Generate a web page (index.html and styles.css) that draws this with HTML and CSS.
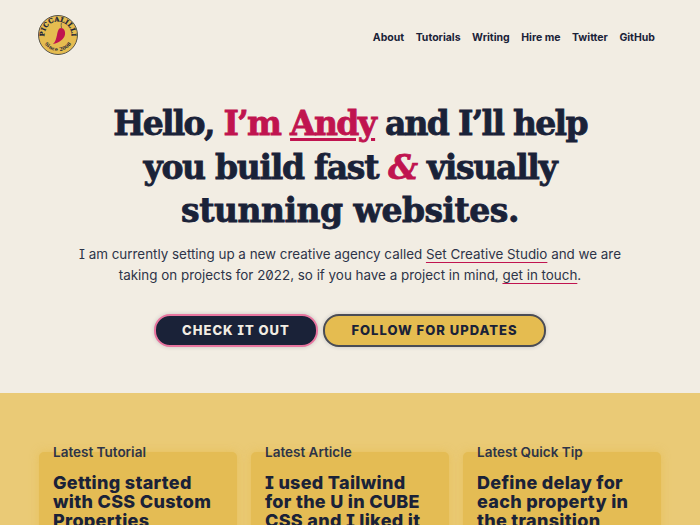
FILE: index.html
```html
<!DOCTYPE html>
<html lang="en">
<head>
    <meta charset="UTF-8">
    <meta name="viewport" content="width=device-width, initial-scale=1.0">
    <title>Piccalilli</title>
    <link rel="stylesheet" href="styles.css">
</head>
<body>
    <header class="site-head">
        <a class="logo" href="#" aria-label="Piccalilli">
            <svg width="42" height="42" viewBox="0 0 42 42">
                <defs>
                    <path id="arc-top" d="M7.5 21a13.500 13.500 0 0 1 27 0"></path>
                    <path id="arc-bottom" d="M5 21a16 16 0 0 0 32 0"></path>
                </defs>
                <circle cx="21" cy="21" r="20.500" fill="#f8f5ee"></circle>
                <circle cx="21" cy="21" r="19.500" fill="#e5bc50" stroke="#55524a" stroke-width="1"></circle>
                <text class="logo-top"><textPath href="#arc-top" startOffset="50%" text-anchor="middle">PICCALILLI</textPath></text>
                <text class="logo-bottom"><textPath href="#arc-bottom" startOffset="50%" text-anchor="middle">Since 2008</textPath></text>
                <path d="M24.500 14c-.4-1.500-.4-3.500-.1-5" fill="none" stroke="#55524a" stroke-width=".8"></path>
                <path d="M24 14c3 0 4.500 3 4 6.500-.7 4.500-6 8.500-12 9.500 2.500-2 3-5 4-9 .7-3.500 1.500-7 4-7z" fill="#c0144f"></path>
            </svg>
        </a>
        <nav class="nav">
            <a href="#">About</a>
            <a href="#">Tutorials</a>
            <a href="#">Writing</a>
            <a href="#">Hire me</a>
            <a href="#">Twitter</a>
            <a href="#">GitHub</a>
        </nav>
    </header>

    <section class="hero">
        <h1>Hello, <em>I’m <a href="#">Andy</a></em> and I’ll help<br><span class="line-two">you build fast <em class="amp">&amp;</em> visually</span><br><span class="line-three">stunning websites.</span></h1>
        <p>I am currently setting up a new creative agency called <a href="#">Set Creative Studio</a> and we are<br>taking on projects for <span class="num">2022</span>, so if you have a project in mind, <a href="#">get in touch</a>.</p>
        <div class="buttons">
            <a class="btn btn-dark" href="#">CHECK IT OUT</a>
            <a class="btn btn-gold" href="#">FOLLOW FOR UPDATES</a>
        </div>
    </section>

    <section class="latest">
        <article class="card">
            <h2>Latest Tutorial</h2>
            <h3>Getting started with CSS Custom Properties</h3>
        </article>
        <article class="card">
            <h2>Latest Article</h2>
            <h3>I used Tailwind for the U in CUBE CSS and I liked it</h3>
        </article>
        <article class="card">
            <h2>Latest Quick Tip</h2>
            <h3>Define delay for each property in the transition</h3>
        </article>
    </section>
</body>
</html>
```

FILE: styles.css
```css
* {
    padding: 0;
    margin: 0;
    box-sizing: border-box;
}
html, body {
    height: 525px;
    overflow: hidden;
}
body {
    background-color: #f2ede3;
    color: #1a2238;
    font-family: Inter, "Liberation Sans", sans-serif;
    font-feature-settings: "cv08", "zero";
}
a {
    color: inherit;
    text-decoration: none;
}

/* header */
.site-head {
    display: flex;
    justify-content: space-between;
    align-items: center;
    height: 70px;
    padding: 0 45px 0 37px;
}
.logo {
    display: block;
    height: 42px;
}
.logo-top {
    font: 700 6.500px "DejaVu Serif", serif;
    letter-spacing: .2px;
    stroke: #1a2238;
    stroke-width: .2px;
    fill: #1a2238;
}
.logo-bottom {
    font: 700 4.800px "DejaVu Serif", serif;
    letter-spacing: .2px;
    fill: #1a2238;
}
.nav {
    display: flex;
    gap: 11.500px;
    font-size: 10.500px;
    font-weight: 700;
    padding-top: 4px;
}

/* hero */
.hero {
    height: 323px;
    padding-top: 32px;
    text-align: center;
}
h1 {
    font-family: "DejaVu Serif", serif;
    font-size: 33px;
    font-weight: 700;
    line-height: 43.500px;
    letter-spacing: -1.700px;
    -webkit-text-stroke: .8px currentColor;
}
h1 em {
    font-style: normal;
    color: #c0144f;
}
h1 a {
    text-decoration: underline;
    text-decoration-thickness: 3px;
    text-underline-offset: 3px;
}
.line-two {
    letter-spacing: -1.300px;
}
.line-three {
    letter-spacing: -.5px;
}
h1 .amp {
    font-style: italic;
}
.hero p {
    margin-top: 11px;
    font-size: 13.400px;
    line-height: 21px;
    color: #2d3448;
}
.hero p a {
    text-decoration: underline;
    text-decoration-color: #c0144f;
    text-decoration-thickness: 1px;
    text-underline-offset: 3px;
}
.buttons {
    display: flex;
    justify-content: center;
    gap: 5px;
    margin-top: 28px;
}
.btn {
    display: flex;
    align-items: center;
    justify-content: center;
    height: 33px;
    border-radius: 16px;
    border: 2px solid;
    font-size: 13px;
    font-weight: 800;
    letter-spacing: 1px;
    box-shadow: 0 0 4px rgba(26, 34, 56, .2);
}
.btn-dark {
    width: 164px;
    background-color: #1a2238;
    border-color: #e8759f;
    color: #f2ede3;
}
.btn-gold {
    width: 223px;
    background-color: #e5bc50;
    border-color: #4a4c55;
    color: #1a2238;
}

/* latest */
.latest {
    display: grid;
    grid-template-columns: repeat(3, 1fr);
    gap: 14px;
    height: 132px;
    padding: 59px 39px 0;
    background-color: #eaca76;
    overflow: hidden;
}
.card {
    height: 200px;
    padding: 0 20px 0 14px;
    background-color: #e4bc54;
    border-radius: 5px;
    box-shadow: 0 0 10px rgba(229, 188, 80, .7);
}
.card h2 {
    margin-top: -8px;
    font-size: 13.500px;
    font-weight: 600;
    line-height: 17px;
    color: #2d3448;
}
.card h3 {
    margin-top: 13px;
    font-size: 18px;
    font-weight: 800;
    line-height: 18.800px;
    letter-spacing: .3px;
}
```
